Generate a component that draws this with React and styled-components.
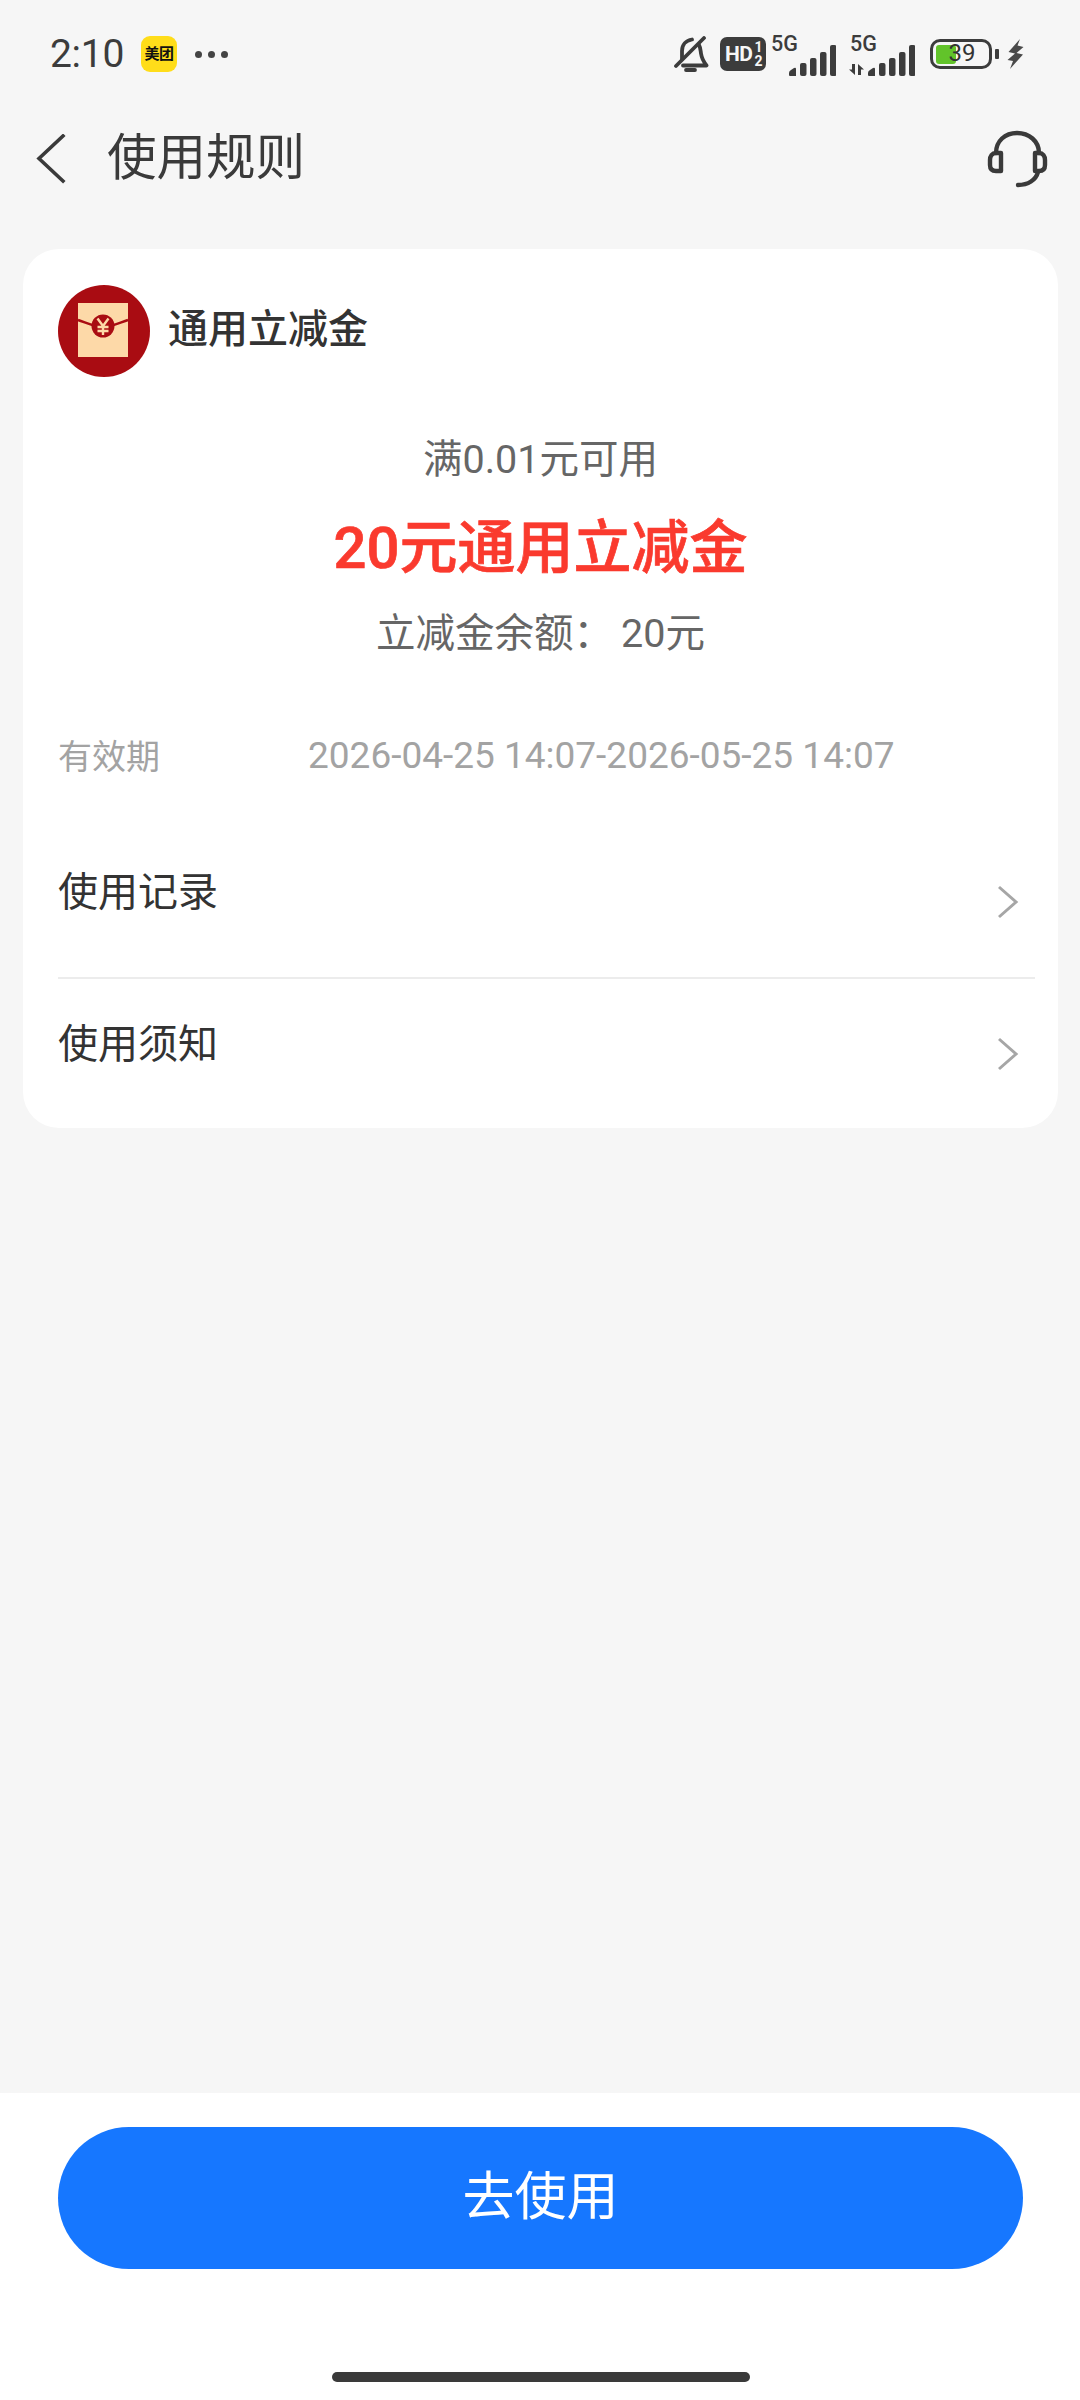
import React from 'react';
import styled, { createGlobalStyle } from 'styled-components';

const GlobalStyle = createGlobalStyle`
  html, body {
    margin: 0;
    padding: 0;
    background: #f6f6f6;
    font-family: Roboto, "Noto Sans CJK SC", sans-serif;
  }
  * { box-sizing: border-box; }
`;

const Page = styled.div`
  width: 1080px;
  height: 2400px;
  display: flex;
  flex-direction: column;
  background: #f6f6f6;
  overflow: hidden;
`;

const StatusBar = styled.div`
  height: 108px;
  padding: 0 56px 0 50px;
  display: flex;
  align-items: center;
  color: #3c3c3c;
`;

const Time = styled.span`
  font-size: 39px;
  line-height: 1;
  width: 91px;
  letter-spacing: -0.3px;
`;

const AppBadge = styled.div`
  width: 36px;
  height: 36px;
  border-radius: 9px;
  background: #ffdd1a;
  color: #111;
  font-size: 15px;
  font-weight: 700;
  line-height: 36px;
  text-align: center;
  letter-spacing: -0.5px;
  white-space: nowrap;
`;

const Dots = styled.div`
  margin-left: 18px;
  display: flex;
  gap: 6px;
`;

const Dot = styled.i`
  width: 7px;
  height: 7px;
  border-radius: 50%;
  background: #444;
`;

const StatusRight = styled.div`
  margin-left: auto;
  display: flex;
  align-items: center;
`;

const HdBadge = styled.div`
  margin-left: 11px;
  width: 46px;
  height: 34px;
  border-radius: 7px;
  background: #3c3c3c;
  color: #f6f6f6;
  font-size: 21px;
  font-weight: 700;
  display: flex;
  align-items: center;
  padding-left: 5px;
  letter-spacing: -0.6px;
`;

const Fraction = styled.span`
  font-size: 14px;
  line-height: 14px;
  margin-left: 1px;
  width: 10px;
  text-align: center;
  font-weight: 700;
`;

const Signal = styled.div`
  position: relative;
  width: ${p => p.$w}px;
  height: 36px;
  margin-left: ${p => p.$gap}px;
`;

const NetLabel = styled.span`
  position: absolute;
  left: 0;
  top: -3px;
  font-size: 21.5px;
  line-height: 22px;
  font-weight: 500;
  color: #3c3c3c;
`;

const Battery = styled.div`
  margin-left: 15px;
  position: relative;
  width: 62px;
  height: 30px;
  border: 3.5px solid #3c3c3c;
  border-radius: 10px;
  text-align: center;
  font-size: 24px;
  line-height: 23px;
  color: #333;
  padding-left: 2px;
`;

const BatteryFill = styled.div`
  position: absolute;
  left: 3px;
  top: 2.5px;
  bottom: 2.5px;
  width: 20px;
  border-radius: 3px;
  background: #62c32a;
`;

const BatteryText = styled.span`
  position: relative;
`;

const BatteryNub = styled.div`
  width: 4px;
  height: 10px;
  margin-left: 3px;
  border-radius: 1px;
  background: #3c3c3c;
`;

const BoltWrap = styled.span`
  display: flex;
  margin-left: 8px;
`;

const Header = styled.div`
  height: 102px;
  padding: 0 32px 0 36px;
  display: flex;
  align-items: center;
`;

const Title = styled.h1`
  margin: 0 0 0 41px;
  font-size: 49.5px;
  line-height: 1;
  font-weight: 400;
  color: #3a3a3a;
`;

const HeadsetWrap = styled.div`
  margin-left: auto;
  display: flex;
`;

const Card = styled.div`
  margin: 39px 22px 0 23px;
  padding: 36px 23px 0 35px;
  height: 879px;
  background: #fff;
  border-radius: 36px;
`;

const CardHead = styled.div`
  display: flex;
  align-items: center;
  gap: 18px;
`;

const CardName = styled.div`
  font-size: 40px;
  line-height: 1;
  font-weight: 500;
  color: #333;
  margin-bottom: 2px;
`;

const Center = styled.div`
  margin: 0 12px 0 -35px;
  padding-left: 35px;
  text-align: center;
`;

const MinLine = styled.div`
  margin-top: 58px;
  font-size: 39.5px;
  line-height: 50px;
  color: #666;
`;

const Amount = styled.div`
  margin-top: 28px;
  font-size: 58px;
  line-height: 70px;
  font-weight: 500;
  color: #fa3a2e;
  -webkit-text-stroke: 0.7px #fa3a2e;
`;

const Balance = styled.div`
  margin-top: 26px;
  font-size: 39.5px;
  line-height: 50px;
  color: #666;
`;

const Validity = styled.div`
  margin-top: 55px;
  padding-top: 15px;
  display: flex;
  align-items: center;
  height: 65px;
  color: #a3a3a3;
`;

const ValidityLabel = styled.span`
  width: 250px;
  font-size: 34px;
`;

const ValidityDate = styled.span`
  font-size: 37px;
  white-space: nowrap;
  margin-top: 2px;
`;

const Row = styled.div`
  height: ${p => p.$h}px;
  padding-top: ${p => p.$top}px;
  display: flex;
  justify-content: space-between;
  align-items: center;
  border-bottom: ${p => (p.$line ? '2px solid #ececec' : 'none')};
`;

const RowText = styled.span`
  font-size: 40px;
  line-height: 1;
  color: #333;
  margin-bottom: 18px;
`;

const ChevronBox = styled.span`
  display: flex;
  margin-right: 16px;
`;

const Spacer = styled.div`
  flex: 1;
`;

const Footer = styled.div`
  height: 307px;
  padding: 34px 57px 0 58px;
  background: #fff;
  display: flex;
  flex-direction: column;
  align-items: center;
`;

const UseButton = styled.button`
  width: 100%;
  height: 142px;
  border: 0;
  border-radius: 71px;
  background: #1677ff;
  color: #fff;
  font-family: inherit;
  font-size: 52px;
  line-height: 1;
`;

const HomeBar = styled.div`
  margin-top: 103px;
  width: 418px;
  height: 10px;
  border-radius: 5px;
  background: #3a3a3a;
`;

const BellOff = () => (
  <svg width="36" height="36" viewBox="0 0 36 36" fill="none" stroke="#3c3c3c" strokeWidth="3.8" strokeLinecap="round" strokeLinejoin="round">
    <path d="M9 23V15C9 9 13 4.500 19 3.500M26 9c1.500 2.500 1.500 5 2 8.500.6 4 2.500 8 5.500 12H10" />
    <path d="M31 2 3 30" />
    <path d="M13 34h9" />
  </svg>
);

const Bars = ({ arrows }) => (
  <svg width={arrows ? 66 : 47} height="31" viewBox={arrows ? '-19 0 66 31' : '0 0 47 31'} fill="#3c3c3c" style={{ position: 'absolute', right: 0, top: 9 }}>
    {arrows && <path d="M-13 19v11l-6-5.500h3V19zM-10 30V19l6 5.500h-3V30z" />}
    <path d="M0 28q0-2 2-3l3-2q2-1 2 1v7H1q-1 0-1-1z" />
    <rect x="11" y="18" width="6.500" height="13" rx="2" />
    <rect x="21" y="13" width="6.500" height="18" rx="2" />
    <rect x="31" y="7" width="6.500" height="24" rx="2" />
    <rect x="41" y="0" width="6.500" height="31" rx="2" />
  </svg>
);

const Bolt = () => (
  <svg width="17" height="30" viewBox="0 0 17 30" fill="#4a4a4a">
    <path d="M13 0 1.500 13 8 14.500.5 21 6 22 3 30l13-14.500L9.500 14l7-6-6-1.500z" />
  </svg>
);

const BackIcon = () => (
  <svg width="30" height="50" viewBox="0 0 30 50" fill="none" stroke="#3a3a3a" strokeWidth="3.6" strokeLinecap="square">
    <path d="M27 2 3 24.500 27 47" />
  </svg>
);

const HeadsetIcon = () => (
  <svg width="62" height="58" viewBox="0 0 62 58" fill="none" stroke="#3a3a3a" strokeWidth="4.4" strokeLinecap="round" strokeLinejoin="round">
    <path d="M10 23C10 11 19 3 31 3s22 8 22 20" />
    <path d="M15 23h-5c-4 0-6 3-6 7v5c0 4 2 6 6 6h5zM49 23h4c4 0 6 3 6 7v5c0 4-2 6-6 6h-4z" />
    <path d="M52 42c-2 8-10 13-20 13" />
  </svg>
);

const EnvelopeIcon = () => (
  <svg width="92" height="92" viewBox="0 0 92 92">
    <circle cx="46" cy="46" r="46" fill="#a90c12" />
    <rect x="20" y="18" width="50" height="54" fill="#fdd9a8" />
    <path d="M20 35c9 3 17 7 25 7s16-4 25-7" fill="none" stroke="#a90c12" strokeWidth="2.500" />
    <circle cx="45" cy="41" r="11.500" fill="#a90c12" />
    <path d="M39.500 33.500l5.500 7.500 5.500-7.500M45 41v9M39.500 42h11M39.500 46h11" fill="none" stroke="#fdd9a8" strokeWidth="2.400" />
  </svg>
);

const Chevron = () => (
  <svg width="22" height="34" viewBox="0 0 22 34" fill="none" stroke="#a6a6a6" strokeWidth="3">
    <path d="M2 2l17 15L2 32" />
  </svg>
);

export default function App() {
  return (
    <Page>
      <GlobalStyle />
      <StatusBar>
        <Time>2:10</Time>
        <AppBadge>美团</AppBadge>
        <Dots>
          <Dot />
          <Dot />
          <Dot />
        </Dots>
        <StatusRight>
          <BellOff />
          <HdBadge>
            HD
            <Fraction>
              1
              <br />2
            </Fraction>
          </HdBadge>
          <Signal $w={65} $gap={5}>
            <NetLabel>5G</NetLabel>
            <Bars />
          </Signal>
          <Signal $w={65} $gap={14}>
            <NetLabel>5G</NetLabel>
            <Bars arrows />
          </Signal>
          <Battery>
            <BatteryFill />
            <BatteryText>39</BatteryText>
          </Battery>
          <BatteryNub />
          <BoltWrap>
            <Bolt />
          </BoltWrap>
        </StatusRight>
      </StatusBar>

      <Header>
        <BackIcon />
        <Title>使用规则</Title>
        <HeadsetWrap>
          <HeadsetIcon />
        </HeadsetWrap>
      </Header>

      <Card>
        <CardHead>
          <EnvelopeIcon />
          <CardName>通用立减金</CardName>
        </CardHead>
        <Center>
          <MinLine>满0.01元可用</MinLine>
          <Amount>20元通用立减金</Amount>
          <Balance>{'立减金余额\uFF1A\u200920元'}</Balance>
        </Center>
        <Validity>
          <ValidityLabel>有效期</ValidityLabel>
          <ValidityDate>2026-04-25 14:07-2026-05-25 14:07</ValidityDate>
        </Validity>
        <Row $h={200} $top={47} $line>
          <RowText>使用记录</RowText>
          <ChevronBox>
            <Chevron />
          </ChevronBox>
        </Row>
        <Row $h={147} $top={3}>
          <RowText>使用须知</RowText>
          <ChevronBox>
            <Chevron />
          </ChevronBox>
        </Row>
      </Card>

      <Spacer />

      <Footer>
        <UseButton>去使用</UseButton>
        <HomeBar />
      </Footer>
    </Page>
  );
}
